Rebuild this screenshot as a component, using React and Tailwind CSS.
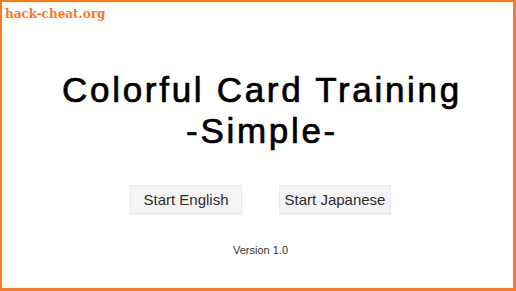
import React from "react";

export default function App() {
  return (
    <div className="relative h-[291px] w-full overflow-hidden border-t-2 border-l-2 border-r-[3px] border-b-[3px] border-[#fb7a24] bg-white" style={{ fontFamily: '"Liberation Sans", Arial, sans-serif' }}>
      <div className="absolute left-[3px] top-[5px] text-[12px] font-bold leading-[14px] text-[#fb7a24]" style={{ fontFamily: '"DejaVu Serif", serif' }}>
        hack-cheat.org
      </div>
      <div className="flex flex-col items-center pl-[6px] pt-[67px]">
        <div className="pl-[3px] text-center text-[35px] leading-[41px] tracking-[2.7px] text-black [-webkit-text-stroke:0.7px_black]">
          <div>Colorful Card Training</div>
          <div>-Simple-</div>
        </div>
        <div className="mt-[34px] flex gap-[37px]">
          <button className="flex h-[29px] w-[112px] items-center justify-center border border-[#e9e9e9] bg-[#f4f4f4] pt-[2px] text-[15px] text-[#2e2e2e] shadow-[0_1px_1px_rgba(0,0,0,0.06)]">
            Start English
          </button>
          <button className="flex h-[29px] w-[112px] items-center justify-center border border-[#e9e9e9] bg-[#f4f4f4] pt-[2px] text-[15px] text-[#2e2e2e] shadow-[0_1px_1px_rgba(0,0,0,0.06)]">
            Start Japanese
          </button>
        </div>
        <div className="mt-[30px] text-[11px] leading-[13px] text-[#333333]">Version 1.0</div>
      </div>
    </div>
  );
}
